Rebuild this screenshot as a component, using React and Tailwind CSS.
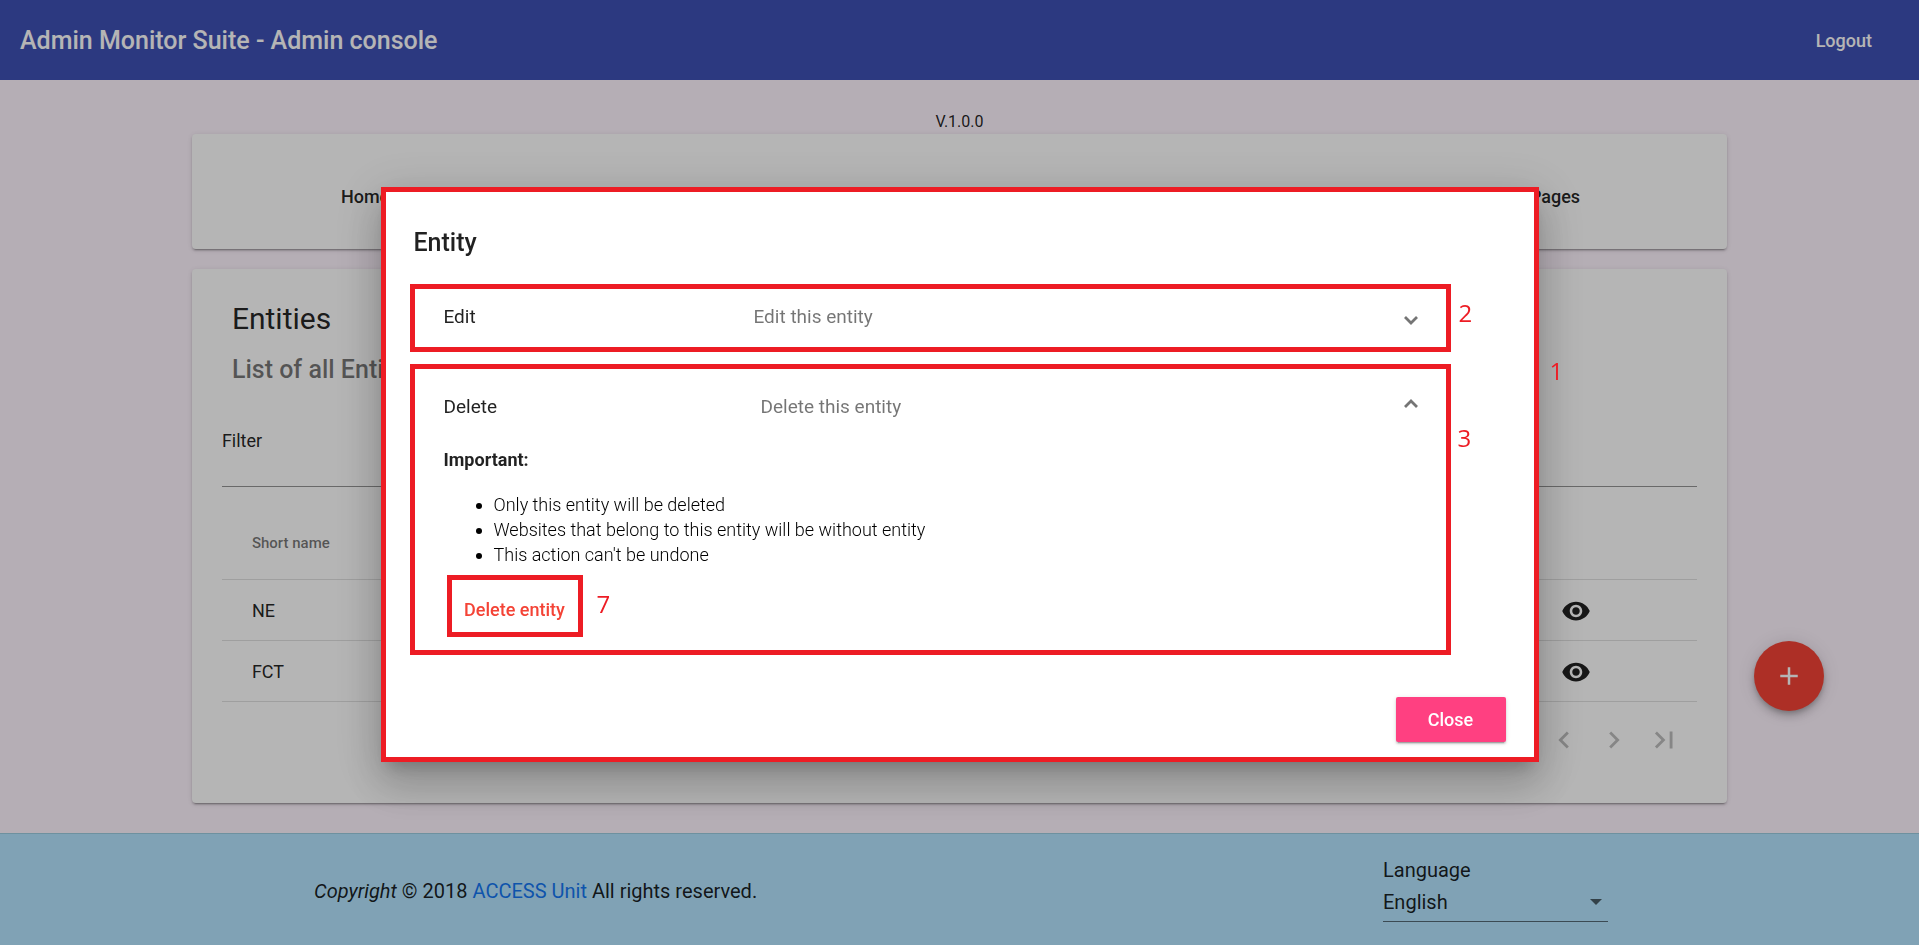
import React from "react";
import { MdAdd, MdChevronLeft, MdChevronRight, MdLastPage, MdVisibility } from "react-icons/md";

const CARD =
  "rounded bg-white shadow-[0_3px_1px_-2px_rgba(0,0,0,0.2),0_2px_2px_0_rgba(0,0,0,0.14),0_1px_5px_0_rgba(0,0,0,0.12)]";

const entities = ["NE", "FCT"];

function Toolbar() {
  return (
    <header className="flex h-20 items-center justify-between bg-[#3f51b5] pt-[2px] pr-[47px] pl-5 text-white">
      <h1 className="text-[25px] font-medium">Admin Monitor Suite - Admin console</h1>
      <button type="button" className="text-lg font-medium">
        Logout
      </button>
    </header>
  );
}

function EntitiesCard() {
  return (
    <section className={`${CARD} mt-5 px-[30px] pt-[30px] pb-[46px]`}>
      <div className="pl-[10px]">
        <h2 className="text-[30px] leading-10">Entities</h2>
        <p className="mt-[15px] text-[25px] leading-8 font-medium text-black/54">List of all Entities</p>
      </div>
      <label htmlFor="filter" className="mt-[43px] block text-lg leading-6">
        Filter
      </label>
      <input
        id="filter"
        type="text"
        className="block h-[34px] w-full border-b border-black/42 bg-transparent text-lg outline-none"
      />
      <table className="mt-5 w-full border-collapse text-left">
        <thead>
          <tr className="h-[72px] border-b border-black/12">
            <th className="pl-[30px] text-[15px] font-medium text-black/54">Short name</th>
            <th className="w-[136px]" aria-label="Details" />
          </tr>
        </thead>
        <tbody>
          {entities.map((name) => (
            <tr key={name} className="h-[61px] border-b border-black/12">
              <td className="pt-[2px] pl-[30px] text-lg">{name}</td>
              <td className="pt-[3px]">
                <button type="button" aria-label={`View ${name}`} className="block">
                  <MdVisibility size={30} />
                </button>
              </td>
            </tr>
          ))}
        </tbody>
      </table>
      <div className="flex justify-end gap-4 pt-[21px] pr-4 text-black/26">
        <button type="button" disabled aria-label="Previous page">
          <MdChevronLeft size={34} />
        </button>
        <button type="button" disabled aria-label="Next page">
          <MdChevronRight size={34} />
        </button>
        <button type="button" disabled aria-label="Last page">
          <MdLastPage size={34} />
        </button>
      </div>
    </section>
  );
}

function Footer() {
  return (
    <footer className="flex flex-1 items-start justify-between border-t border-[#9bcde0] bg-[#b5e5ff] pt-[22px] pr-[311px] pb-[23px] pl-[314px] text-xl">
      <p className="pt-[21px] leading-7">
        <em>Copyright</em> © 2018{" "}
        <a href="#access-unit" className="text-[#1577f2]">
          ACCESS Unit
        </a>{" "}
        All rights reserved.
      </p>
      <div className="w-[225px]">
        <label htmlFor="language" className="block leading-7">
          Language
        </label>
        <div className="relative">
          <select
            id="language"
            className="block h-[38px] w-full appearance-none border-b border-black/54 bg-transparent outline-none"
          >
            <option>English</option>
          </select>
          <svg
            viewBox="0 0 12 6"
            className="pointer-events-none absolute top-[15px] right-[6px] h-[6px] w-3 fill-black/60"
            aria-hidden="true"
          >
            <path d="M0 0h12L6 6z" />
          </svg>
        </div>
      </div>
    </footer>
  );
}

function Marker({ className, children }) {
  return (
    <span className={`absolute left-full font-['Open_Sans',sans-serif] text-2xl leading-6 text-[#ed1c24] ${className}`}>
      {children}
    </span>
  );
}

function Chevron({ up = false }) {
  return (
    <svg viewBox="0 0 14 9" className="h-[9px] w-[14px] fill-none stroke-[#757575]" strokeWidth="2.8" aria-hidden="true">
      <path d={up ? "M1 8L7 2L13 8" : "M1 1L7 7L13 1"} />
    </svg>
  );
}

function EntityDialog() {
  return (
    <div className="fixed inset-0 grid place-items-center bg-black/29 pt-1">
      <div
        role="dialog"
        aria-labelledby="dialog-title"
        className="relative w-full max-w-[1158px] border-[5px] border-[#ed1c24] bg-white pt-[35px] pr-7 pb-[15px] pl-6 shadow-[0_11px_15px_-7px_rgba(0,0,0,0.2),0_24px_38px_3px_rgba(0,0,0,0.14),0_9px_46px_8px_rgba(0,0,0,0.12)]"
      >
        <Marker className="top-[167px] ml-4">1</Marker>
        <h2 id="dialog-title" className="pl-1 text-[25px] leading-8 font-medium">
          Entity
        </h2>

        <div className="mt-[25px] mr-[55px] flex flex-col gap-3">
          <section className="relative border-[5px] border-[#ed1c24]">
            <Marker className="top-3 ml-[13px]">2</Marker>
            <button type="button" aria-expanded="false" className="flex h-[58px] w-full items-center pr-7 pb-[2px] pl-[29px] text-left text-[19px]">
              <span className="w-[310px]">Edit</span>
              <span className="flex-1 text-black/54">Edit this entity</span>
              <span className="pt-[6px]">
                <Chevron />
              </span>
            </button>
          </section>

          <section className="relative border-[5px] border-[#ed1c24] pb-[13px]">
            <Marker className="top-[57px] ml-3">3</Marker>
            <button type="button" aria-expanded="true" className="flex h-[77px] w-full items-center pr-7 pl-[29px] text-left text-[19px]">
              <span className="w-[317px]">Delete</span>
              <span className="flex-1 text-black/54">Delete this entity</span>
              <span className="pb-2">
                <Chevron up />
              </span>
            </button>
            <div className="px-[29px] pt-px text-lg leading-[25px]">
              <p className="font-bold">Important:</p>
              <ul className="mt-5 list-disc pl-[50px] font-light text-black">
                <li>Only this entity will be deleted</li>
                <li>Websites that belong to this entity will be without entity</li>
                <li>This action can't be undone</li>
              </ul>
              <div className="relative mt-2 ml-[3px] w-[136px] border-[5px] border-[#ed1c24]">
                <Marker className="top-3 ml-[19px]">7</Marker>
                <button type="button" className="h-[52px] w-full pt-[6px] font-medium whitespace-nowrap text-[#f44336]">
                  Delete entity
                </button>
              </div>
            </div>
          </section>
        </div>

        <div className="mt-[42px] flex justify-end">
          <button
            type="button"
            className="h-[45px] w-[110px] rounded-xs bg-[#ff4081] text-lg font-medium text-white shadow-[0_3px_1px_-2px_rgba(0,0,0,0.2),0_2px_2px_0_rgba(0,0,0,0.14),0_1px_5px_0_rgba(0,0,0,0.12)]"
          >
            Close
          </button>
        </div>
      </div>
    </div>
  );
}

export default function App() {
  return (
    <div className="flex min-h-screen flex-col bg-[#fff5ff] font-[Roboto,sans-serif] text-black/87">
      <Toolbar />
      <main className="mx-auto w-4/5 pt-[30px] pb-[30px]">
        <p className="text-center text-base leading-6">V.1.0.0</p>
        <nav className={`${CARD} flex justify-between pr-[147px] pl-[149px] pt-[51px] pb-10 text-lg leading-6 font-medium`}>
          <a href="#home">Home</a>
          <a href="#pages">Pages</a>
        </nav>
        <EntitiesCard />
      </main>
      <button
        type="button"
        aria-label="Add entity"
        className="fixed right-[95px] bottom-[234px] grid size-[70px] place-items-center rounded-full bg-[#f44336] text-white shadow-[0_3px_5px_-1px_rgba(0,0,0,0.2),0_6px_10px_0_rgba(0,0,0,0.14),0_1px_18px_0_rgba(0,0,0,0.12)]"
      >
        <MdAdd size={30} />
      </button>
      <Footer />
      <EntityDialog />
    </div>
  );
}
